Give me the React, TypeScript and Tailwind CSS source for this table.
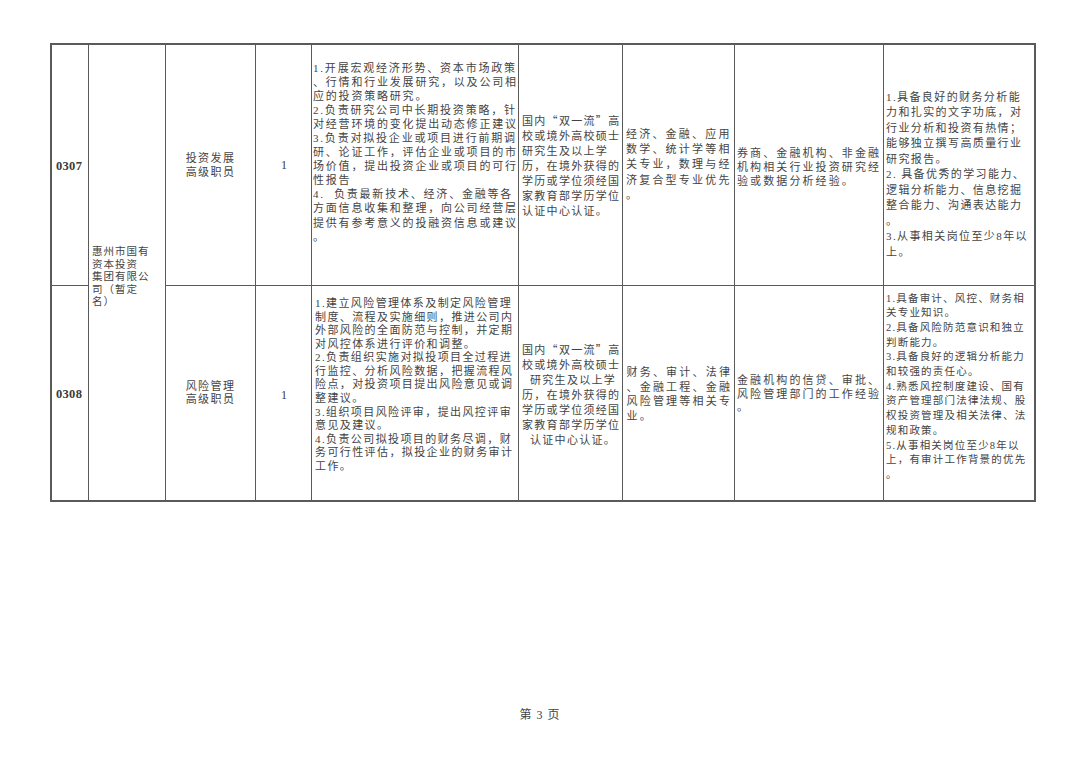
import React from "react";

const FONT = "font-['Liberation_Serif','Noto_Sans_CJK_SC',serif]";

function Lines({ lines, cls }: { lines: string[]; cls: string }) {
  return (
    <div className={`whitespace-pre text-[#444] ${cls}`}>
      {lines.map((l, i) => (
        <div key={i}>{l}</div>
      ))}
    </div>
  );
}

function Quote() {
  return (
    <div>
      国内<span className="font-['Noto_Sans_CJK_SC',sans-serif]">“</span>双一流
      <span className="font-['Noto_Sans_CJK_SC',sans-serif]">”</span>高
    </div>
  );
}

export default function App() {
  return (
    <div className={`w-[1080px] h-[763px] bg-white overflow-hidden ${FONT}`}>
      <div className="ml-[50px] pt-[43px] w-[986px]">
        <div className="grid grid-cols-[36px_76px_89px_55px_206px_103px_111px_148px_150px] grid-rows-[240px_214px] gap-px bg-[#5a5a5a] border-2 border-[#5a5a5a]">
          {/* Row 1 */}
          <div className="bg-white flex items-center pl-[4px] pt-[3px] text-[12.5px] font-bold text-[#3a3a3a] tracking-[0.3px]">0307</div>
          <div className="bg-white row-span-2 pt-[201px] pl-[3px]">
            <Lines
              cls="text-[10.5px] leading-[12.6px] tracking-[1px]"
              lines={["惠州市国有", "资本投资", "集团有限公", "司（暂定", "名）"]}
            />
          </div>
          <div className="bg-white pt-[106px] text-center">
            <Lines cls="text-[11px] leading-[14.4px] tracking-[1.4px]" lines={["投资发展", "高级职员"]} />
          </div>
          <div className="bg-white flex items-center justify-center text-[12px] text-[#3a3a3a] pl-[1px]">1</div>
          <div className="bg-white pt-[15.5px] pl-[1px]">
            <Lines
              cls="text-[11px] leading-[14.1px] tracking-[1.8px]"
              lines={[
                "1.开展宏观经济形势、资本市场政策",
                "、行情和行业发展研究，以及公司相",
                "应的投资策略研究。",
                "2.负责研究公司中长期投资策略，针",
                "对经营环境的变化提出动态修正建议",
                "3.负责对拟投企业或项目进行前期调",
                "研、论证工作，评估企业或项目的市",
                "场价值，提出投资企业或项目的可行",
                "性报告",
                "4.  负责最新技术、经济、金融等各",
                "方面信息收集和整理，向公司经营层",
                "提供有参考意义的投融资信息或建议",
                "。",
              ]}
            />
          </div>
          <div className="bg-white pt-[67.5px] pl-[3px]">
            <div className="whitespace-pre text-[#444] text-[11px] leading-[15px] tracking-[1.3px]">
              <Quote />
              <div>校或境外高校硕士</div>
              <div>研究生及以上学</div>
              <div>历，在境外获得的</div>
              <div>学历或学位须经国</div>
              <div>家教育部学历学位</div>
              <div>认证中心认证。</div>
            </div>
          </div>
          <div className="bg-white pt-[81.5px] pl-[3px]">
            <Lines
              cls="text-[11px] leading-[15.4px] tracking-[2.2px]"
              lines={["经济、金融、应用", "数学、统计学等相", "关专业，数理与经", "济复合型专业优先", "。"]}
            />
          </div>
          <div className="bg-white pt-[101px] pl-[2px]">
            <Lines
              cls="text-[11px] leading-[14.2px] tracking-[2.1px]"
              lines={["券商、金融机构、非金融", "机构相关行业投资研究经", "验或数据分析经验。"]}
            />
          </div>
          <div className="bg-white pt-[44.5px] pl-[2px]">
            <Lines
              cls="text-[11px] leading-[15.5px] tracking-[1.4px]"
              lines={[
                "1.具备良好的财务分析能",
                "力和扎实的文字功底，对",
                "行业分析和投资有热情；",
                "能够独立撰写高质量行业",
                "研究报告。",
                "2. 具备优秀的学习能力、",
                "逻辑分析能力、信息挖掘",
                "整合能力、沟通表达能力",
                "。",
                "3.从事相关岗位至少8年以",
                "上。",
              ]}
            />
          </div>

          {/* Row 2 */}
          <div className="bg-white flex items-center pl-[4px] pt-[3px] text-[12.5px] font-bold text-[#3a3a3a] tracking-[0.3px]">0308</div>
          <div className="bg-white pt-[94px] text-center">
            <Lines cls="text-[11px] leading-[13.4px] tracking-[1.4px]" lines={["风险管理", "高级职员"]} />
          </div>
          <div className="bg-white flex items-center justify-center text-[12px] text-[#3a3a3a] pl-[1px] pt-[3px]">1</div>
          <div className="bg-white pt-[11px] pl-[3px]">
            <Lines
              cls="text-[11px] leading-[13.56px] tracking-[1.4px]"
              lines={[
                "1.建立风险管理体系及制定风险管理",
                "制度、流程及实施细则，推进公司内",
                "外部风险的全面防范与控制，并定期",
                "对风控体系进行评价和调整。",
                "2.负责组织实施对拟投项目全过程进",
                "行监控、分析风险数据，把握流程风",
                "险点，对投资项目提出风险意见或调",
                "整建议。",
                "3.组织项目风险评审，提出风控评审",
                "意见及建议。",
                "4.负责公司拟投项目的财务尽调，财",
                "务可行性评估，拟投企业的财务审计",
                "工作。",
              ]}
            />
          </div>
          <div className="bg-white pt-[55.5px] pl-[3px]">
            <div className="whitespace-pre text-[#444] text-[11px] leading-[15px] tracking-[1.3px]">
              <Quote />
              <div>校或境外高校硕士</div>
              <div className="pl-[8px]">研究生及以上学</div>
              <div>历，在境外获得的</div>
              <div>学历或学位须经国</div>
              <div>家教育部学历学位</div>
              <div className="pl-[8px]">认证中心认证。</div>
            </div>
          </div>
          <div className="bg-white pt-[79px] pl-[3.5px]">
            <Lines
              cls="text-[11px] leading-[14.5px] tracking-[2.2px]"
              lines={["财务、审计、法律", "、金融工程、金融", "风险管理等相关专", "业。"]}
            />
          </div>
          <div className="bg-white pt-[88px] pl-[2px]">
            <Lines
              cls="text-[11px] leading-[13.6px] tracking-[2.1px]"
              lines={["金融机构的信贷、审批、", "风险管理部门的工作经验", "。"]}
            />
          </div>
          <div className="bg-white pt-[5.5px] pl-[2px]">
            <Lines
              cls="text-[10.5px] leading-[14.7px] tracking-[1.2px]"
              lines={[
                "1.具备审计、风控、财务相",
                "关专业知识。",
                "2.具备风险防范意识和独立",
                "判断能力。",
                "3.具备良好的逻辑分析能力",
                "和较强的责任心。",
                "4.熟悉风控制度建设、国有",
                "资产管理部门法律法规、股",
                "权投资管理及相关法律、法",
                "规和政策。",
                "5.从事相关岗位至少8年以",
                "上，有审计工作背景的优先",
                "。",
              ]}
            />
          </div>
        </div>
      </div>
      <div className="mt-[205px] text-center text-[12px] leading-[16px] text-[#444] whitespace-pre tracking-[1px]">第 3 页</div>
    </div>
  );
}
